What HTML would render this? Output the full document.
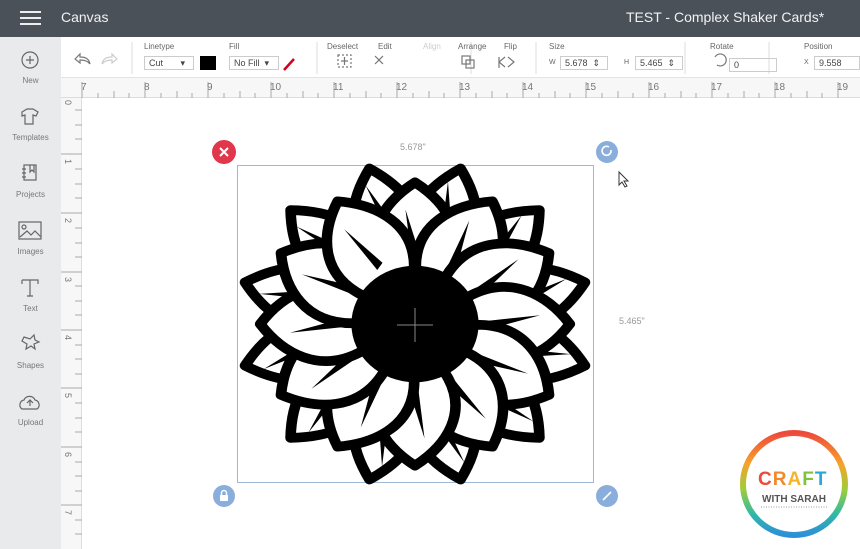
<!DOCTYPE html>
<html><head><meta charset="utf-8"><style>
*{margin:0;padding:0;box-sizing:border-box}
body{width:860px;height:549px;overflow:hidden;background:#fff;font-family:"Liberation Sans",sans-serif;position:relative}
.top{position:absolute;left:0;top:0;width:860px;height:37px;background:#4b5159;color:#f2f2f2}
.side{position:absolute;left:0;top:37px;width:61px;height:512px;background:#e9eaec}
.tb{position:absolute;left:61px;top:37px;width:799px;height:41px;background:#fff;border-bottom:1px solid #e4e4e4}
.hr{position:absolute;left:61px;top:78px;width:799px;height:20px;background:#f7f7f8;border-bottom:1px solid #ddd}
.vr{position:absolute;left:61px;top:98px;width:21px;height:451px;background:#f7f7f8;border-right:1px solid #ddd}
.lbl{position:absolute;font-size:9px;color:#666}
.sl{position:absolute;font-size:8px;color:#777;width:61px;text-align:center}
.inp{position:absolute;height:14px;border:1px solid #ccc;font-size:9px;color:#444;padding-left:4px;line-height:12px}
</style></head><body>
<div class="top">
<div style="position:absolute;left:20px;top:11px;width:21px;height:2px;background:#eee;box-shadow:0 6px 0 #eee,0 12px 0 #eee"></div>
<div style="position:absolute;left:61px;top:9px;font-size:14px">Canvas</div>
<div style="position:absolute;left:626px;top:9px;font-size:14px">TEST - Complex Shaker Cards*</div>
</div>
<div class="side">
<svg width="61" height="420" style="position:absolute;left:0;top:0" fill="none" stroke="#666" stroke-width="1.2">
<circle cx="30" cy="23" r="8"/><path d="M26 23h8M30 19v8"/>
<path d="M22 75l5-3h6l5 3-2 4-3-1v9h-8v-9l-3 1z"/>
<rect x="24" y="128" width="12" height="15"/><path d="M22 132h4M22 136h4M22 140h4M30 128v7l2-2 2 2v-7"/>
<rect x="19" y="185" width="22" height="17"/><circle cx="24" cy="190" r="2"/><path d="M20 200l7-6 4 4 4-4 6 6"/>
<path d="M22 243h16v4M30 243v16M27 259h6M22 243v4"/>
<path d="M24 300l6 2 4-4 1 5 4 2-5 2 1 5-4-3-5 3 1-5-5-3z"/>
<path d="M22 372a5 5 0 0 1 2-9 6 6 0 0 1 11 0 5 5 0 0 1 2 9zM30 369v-6M27 366l3-3 3 3"/>
</svg>
<div class="sl" style="top:39px">New</div>
<div class="sl" style="top:96px">Templates</div>
<div class="sl" style="top:153px">Projects</div>
<div class="sl" style="top:210px">Images</div>
<div class="sl" style="top:267px">Text</div>
<div class="sl" style="top:324px">Shapes</div>
<div class="sl" style="top:381px">Upload</div>
</div>
<div class="tb">
<svg width="799" height="41" style="position:absolute;left:0;top:0" fill="none" stroke="#777" stroke-width="1.2">
<path d="M14 22l5-5v3c6 0 9 2 10 7-2-3-5-4-10-4v3z"/>
<path d="M56 22l-5-5v3c-6 0-9 2-10 7 2-3 5-4 10-4v3z" stroke="#ccc"/>
<path d="M71 5v32M256 5v32M410 5v32M475 5v32M624 5v32M708 5v32" stroke="#e2e2e2"/>
<path d="M223 33l10-11" stroke="#d0021b" stroke-width="2.5"/>
<rect x="277" y="18" width="13" height="12" stroke-dasharray="2 2"/><path d="M280 24h7M283.5 20v8"/>
<path d="M314 19l8 8M322 19l-8 8"/>
<rect x="401" y="19" width="8" height="8"/><rect x="405" y="23" width="8" height="8"/>
<path d="M438 20v11M444 20l-6 5 6 5M447 20l6 5-6 5"/>
<path d="M656 28a6 6 0 1 0 -2-8"/>
</svg>
<div style="position:absolute;left:139px;top:19px;width:16px;height:14px;background:#000"></div>
<div class="lbl" style="left:83px;top:5px;font-size:8px">Linetype</div>
<div class="lbl" style="left:168px;top:5px;font-size:8px">Fill</div>
<div class="lbl" style="left:266px;top:5px;font-size:8px">Deselect</div>
<div class="lbl" style="left:317px;top:5px;font-size:8px">Edit</div>
<div class="lbl" style="left:362px;top:5px;font-size:8px;color:#ccc">Align</div>
<div class="lbl" style="left:397px;top:5px;font-size:8px">Arrange</div>
<div class="lbl" style="left:443px;top:5px;font-size:8px">Flip</div>
<div class="lbl" style="left:488px;top:5px;font-size:8px">Size</div>
<div class="lbl" style="left:649px;top:5px;font-size:8px">Rotate</div>
<div class="lbl" style="left:743px;top:5px;font-size:8px">Position</div>
<div class="inp" style="left:83px;top:19px;width:50px">Cut &nbsp;&nbsp;&nbsp;&nbsp;&nbsp;&nbsp;▾</div>
<div class="inp" style="left:168px;top:19px;width:50px">No Fill &nbsp;▾</div>
<div class="lbl" style="left:488px;top:22px;font-size:7px">W</div>
<div class="inp" style="left:499px;top:19px;width:48px">5.678 &nbsp;⇕</div>
<div class="lbl" style="left:563px;top:22px;font-size:7px">H</div>
<div class="inp" style="left:574px;top:19px;width:48px">5.465 &nbsp;⇕</div>
<div class="inp" style="left:668px;top:21px;width:48px">0</div>
<div class="lbl" style="left:743px;top:22px;font-size:7px">X</div>
<div class="inp" style="left:753px;top:19px;width:46px">9.558</div>
</div>
<div class="hr">
<svg width="799" height="20" style="position:absolute;left:0;top:0" stroke="#aaa">
<path d="M21 4v16M84 4v16M147 4v16M210 4v16M273 4v16M336 4v16M399 4v16M462 4v16M525 4v16M588 4v16M651 4v16M714 4v16M777 4v16"/>
<path d="M37 15v5M53 13v7M68 15v5M100 15v5M116 13v7M131 15v5M163 15v5M179 13v7M194 15v5M226 15v5M242 13v7M257 15v5M289 15v5M305 13v7M320 15v5M352 15v5M368 13v7M383 15v5M415 15v5M431 13v7M446 15v5M478 15v5M494 13v7M509 15v5M541 15v5M557 13v7M572 15v5M604 15v5M620 13v7M635 15v5M667 15v5M683 13v7M698 15v5M730 15v5M746 13v7M761 15v5"/>
<g fill="#777" stroke="none" font-size="10" font-family="Liberation Sans"><text x="20" y="12">7</text><text x="83" y="12">8</text><text x="146" y="12">9</text><text x="209" y="12">10</text><text x="272" y="12">11</text><text x="335" y="12">12</text><text x="398" y="12">13</text><text x="461" y="12">14</text><text x="524" y="12">15</text><text x="587" y="12">16</text><text x="650" y="12">17</text><text x="713" y="12">18</text><text x="776" y="12">19</text></g>
</svg></div>
<div class="vr">
<svg width="21" height="451" style="position:absolute;left:0;top:0" stroke="#aaa">
<path d="M0 56h21M0 115h21M0 174h21M0 232h21M0 290h21M0 349h21M0 407h21M14 12h7M14 27h7M14 41h7M14 71h7M14 86h7M14 100h7M14 130h7M14 145h7M14 159h7M14 188h7M14 203h7M14 217h7M14 247h7M14 261h7M14 276h7M14 305h7M14 320h7M14 334h7M14 364h7M14 378h7M14 393h7M14 422h7M14 436h7"/>
<g fill="#777" stroke="none" font-size="9" font-family="Liberation Sans"><text transform="translate(4,2) rotate(90)">0</text><text transform="translate(4,61) rotate(90)">1</text><text transform="translate(4,120) rotate(90)">2</text><text transform="translate(4,179) rotate(90)">3</text><text transform="translate(4,237) rotate(90)">4</text><text transform="translate(4,295) rotate(90)">5</text><text transform="translate(4,354) rotate(90)">6</text><text transform="translate(4,412) rotate(90)">7</text></g>
</svg></div>
<div style="position:absolute;left:237px;top:165px;width:357px;height:318px;border:1px solid #9fb8d8"></div>
<div style="position:absolute;left:400px;top:142px;font-size:9px;color:#999">5.678"</div>
<div style="position:absolute;left:619px;top:316px;font-size:9px;color:#999">5.465"</div>
<svg width="860" height="549" style="position:absolute;left:0;top:0">
<defs>
<g id="pb"><path d="M-22 -70C-40 -110 -25 -140 0 -166C25 -140 40 -110 22 -70Z" fill="#fff" stroke="#000" stroke-width="10" stroke-linejoin="round"/><path d="M-2 -110L-8 -150L5 -112Z" fill="#000"/></g>
<g id="pf"><path d="M-28 -50C-52 -90 -30 -125 0 -146C30 -125 52 -90 28 -50C10 -42 -10 -42 -28 -50Z" fill="#fff" stroke="#000" stroke-width="10" stroke-linejoin="round"/><path d="M-3 -66L-9 -118L5 -70Z" fill="#000"/></g>
</defs>
<g transform="translate(415,324) scale(1.06,0.97)">
<use href="#pb" transform="rotate(15)"/><use href="#pb" transform="rotate(45)"/><use href="#pb" transform="rotate(75)"/><use href="#pb" transform="rotate(105)"/><use href="#pb" transform="rotate(135)"/><use href="#pb" transform="rotate(165)"/><use href="#pb" transform="rotate(195)"/><use href="#pb" transform="rotate(225)"/><use href="#pb" transform="rotate(255)"/><use href="#pb" transform="rotate(285)"/><use href="#pb" transform="rotate(315)"/><use href="#pb" transform="rotate(345)"/>
<use href="#pf" transform="rotate(0)"/><use href="#pf" transform="rotate(30)"/><use href="#pf" transform="rotate(60)"/><use href="#pf" transform="rotate(90)"/><use href="#pf" transform="rotate(120)"/><use href="#pf" transform="rotate(150)"/><use href="#pf" transform="rotate(180)"/><use href="#pf" transform="rotate(210)"/><use href="#pf" transform="rotate(240)"/><use href="#pf" transform="rotate(270)"/><use href="#pf" transform="rotate(300)"/><use href="#pf" transform="rotate(330)"/>
<circle r="60" fill="#000"/>
</g>
<path d="M397 325h36M415 308v34" stroke="#888" stroke-width="1"/>
<circle cx="224" cy="152" r="12" fill="#e0374d"/><path d="M220 148l8 8M228 148l-8 8" stroke="#fff" stroke-width="2"/>
<circle cx="607" cy="152" r="11" fill="#8aaedb"/><path d="M611 150a4.5 4.5 0 1 1-2-3" stroke="#fff" stroke-width="1.6" fill="none"/>
<circle cx="224" cy="496" r="11" fill="#8aaedb"/><rect x="220" y="495" width="8" height="6" fill="#fff"/><path d="M221.5 495v-2a2.5 2.5 0 0 1 5 0v2" stroke="#fff" fill="none" stroke-width="1.4"/>
<circle cx="607" cy="496" r="11" fill="#8aaedb"/><path d="M603 500l8-8" stroke="#fff" stroke-width="1.6"/>
<path d="M619 172v13l3-3 3 5 2-1-3-5h4z" fill="#fff" stroke="#333"/>
<defs><linearGradient id="rb" x1="0" y1="0" x2="0" y2="1"><stop offset="0" stop-color="#ee4a3c"/><stop offset=".3" stop-color="#f6a22b"/><stop offset=".55" stop-color="#9fcd3a"/><stop offset=".8" stop-color="#2fb8a8"/><stop offset="1" stop-color="#2e8fd8"/></linearGradient></defs>
<circle cx="794" cy="484" r="56" fill="#fff"/>
<circle cx="794" cy="484" r="51" fill="none" stroke="url(#rb)" stroke-width="6"/>
<text x="758" y="485" font-family="Liberation Sans" font-weight="bold" font-size="19" fill="#e94b3c" letter-spacing="1">C<tspan fill="#f08a2a">R</tspan><tspan fill="#f3b52a">A</tspan><tspan fill="#7fc241">F</tspan><tspan fill="#2ba6d9">T</tspan></text>
<text x="794" y="502" text-anchor="middle" font-family="Liberation Sans" font-weight="bold" font-size="10" fill="#555">WITH SARAH</text>
<path d="M761 507h66" stroke="#999" stroke-dasharray="1 1.5"/>
</svg>
</body></html>
